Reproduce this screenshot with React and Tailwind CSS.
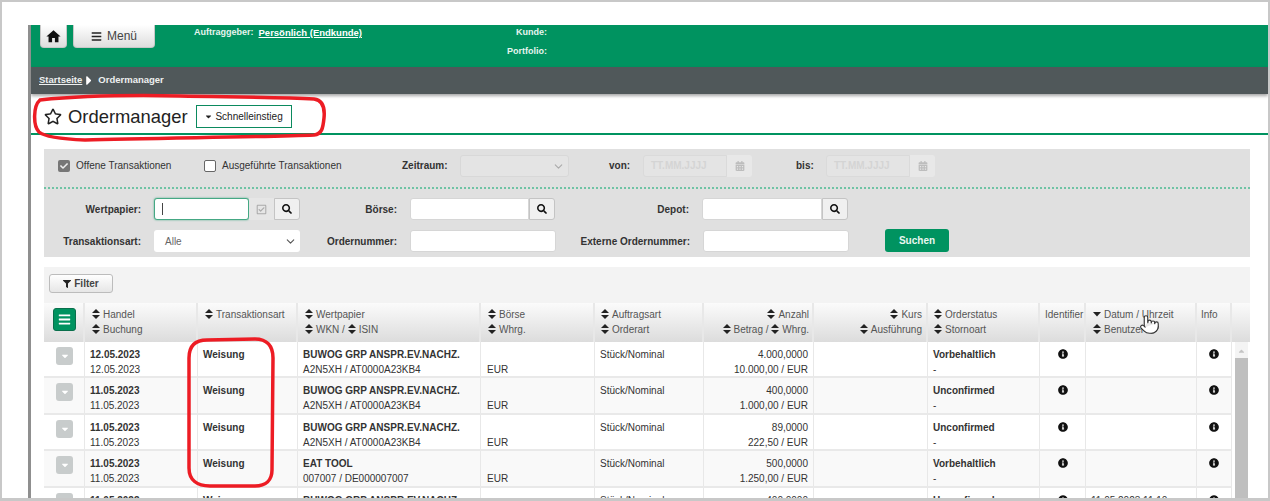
import React from "react";
import { FaBars, FaRegStar, FaCaretDown, FaCaretRight, FaSearch, FaFilter, FaRegCheckSquare, FaCheck, FaCalendarAlt, FaInfoCircle } from "react-icons/fa";
import { MdHome } from "react-icons/md";
import { ChevronDown, Pointer } from "lucide-react";

const GRID = "grid grid-cols-[41px_113px_100px_183px_114px_109px_110px_114px_112px_46px_111px_35px]";

const Sort = ({ down }) => (
  <svg viewBox="0 0 8 10" className="inline-block h-[10px] w-[8px] mr-[3px] align-[-1px] text-[#222]" fill="currentColor">
    {down ? <path d="M0 3H8L4 7.5Z" /> : <path d="M4 0L8 4H0ZM4 10L0 6H8Z" />}
  </svg>
);

const Input = ({ w, cls = "" }) => <div className={`${w} h-[22px] bg-white rounded-[3px] border border-[#d6d6d6] ${cls}`} />;

const SearchBtn = () => (
  <div className="w-[26px] h-[22px] flex items-center justify-center bg-[#f0f0f0] border border-[#c4c4c4] rounded-r-[3px]">
    <FaSearch className="w-[10px] h-[10px] text-[#111]" />
  </div>
);

const DateField = ({ ml }) => (
  <div className={`flex ${ml}`}>
    <div className="w-[84px] h-[22px] bg-[#e4e4e4] border border-[#dadada] rounded-l-[3px] pl-[7px] text-[10px] leading-[20px] font-bold text-[#d4d4d4]">TT.MM.JJJJ</div>
    <div className="w-[25px] h-[22px] bg-[#e8e8e8] rounded-r-[3px] flex items-center justify-center">
      <FaCalendarAlt className="w-[10px] h-[10px] text-[#bdbdbd]" />
    </div>
  </div>
);

const rows = [
  { d: "12.05.2023", d2: "12.05.2023", w: "BUWOG GRP ANSPR.EV.NACHZ.", k: "A2N5XH / AT0000A23KB4", a: "4.000,0000", b: "10.000,00 / EUR", s: "Vorbehaltlich", h: "h-[36px]" },
  { d: "11.05.2023", d2: "11.05.2023", w: "BUWOG GRP ANSPR.EV.NACHZ.", k: "A2N5XH / AT0000A23KB4", a: "400,0000", b: "1.000,00 / EUR", s: "Unconfirmed", h: "h-[37px]" },
  { d: "11.05.2023", d2: "11.05.2023", w: "BUWOG GRP ANSPR.EV.NACHZ.", k: "A2N5XH / AT0000A23KB4", a: "89,0000", b: "222,50 / EUR", s: "Unconfirmed", h: "h-[36px]" },
  { d: "11.05.2023", d2: "11.05.2023", w: "EAT TOOL", k: "007007 / DE000007007", a: "500,0000", b: "1.250,00 / EUR", s: "Vorbehaltlich", h: "h-[37px]" },
  { d: "11.05.2023", d2: "11.05.2023", w: "BUWOG GRP ANSPR.EV.NACHZ.", k: "A2N5XH / AT0000A23KB4", a: "400,0000", b: "1.000,00 / EUR", s: "Unconfirmed", t: "11.05.2023 11:10", h: "h-[36px]" },
];

const cell = "border-r border-[#e8e8e8] px-[5px] pt-[5px] leading-[15px]";
const th = "border-r-2 border-[#e8e8e8] pt-[4px] leading-[15px]";

export default function App() {
  return (
    <div className="relative w-[1270px] h-[501px] overflow-hidden bg-white text-[10px] text-[#333] [font-family:'Liberation_Sans',Arial,sans-serif]">
      <div className="h-full border-t-2 border-l-2 border-r-2 border-b-[3px] border-[#c8c8c8] pt-[23px] overflow-hidden">
        <div className="ml-[26px] h-full border-l-[3px] border-[#8f8f8f] overflow-hidden">
          {/* green header */}
          <div className="h-[42px] bg-[#009360] flex items-start text-[#e6f5ef] font-bold">
            <div className="ml-[9px] w-[27px] h-[23px] bg-gradient-to-b from-[#ffffff] to-[#dedede] rounded-b-[4px] border border-t-0 border-[#c8c8c8] flex items-center justify-center">
              <MdHome className="w-[17px] h-[17px] text-[#111]" />
            </div>
            <div className="ml-[6px] w-[82px] h-[23px] bg-gradient-to-b from-[#ffffff] to-[#dedede] rounded-b-[4px] border border-t-0 border-[#c8c8c8] flex items-center justify-center gap-[5px] text-[12px] font-normal text-[#444]">
              <FaBars className="w-[11px] h-[11px] text-[#222]" />
              Menü
            </div>
            <div className="ml-[39px] pt-[1px] leading-[13px] text-[9px] w-[167px] flex whitespace-nowrap">
              <span>Auftraggeber:</span>
              <span className="ml-[5px] underline text-[9.5px] text-white">Persönlich (Endkunde)</span>
            </div>
            <div className="ml-[126px] -mt-[2px] w-[60px] text-right text-[9px] leading-[19px]">
              <div>Kunde:</div>
              <div>Portfolio:</div>
            </div>
          </div>
          {/* breadcrumb */}
          <div className="relative h-[27px] bg-[#50585a] shadow-[0_2px_3px_rgba(0,0,0,0.35)] flex items-center pl-[8px] text-[#eef0f0] text-[9.5px] font-bold">
            <span className="underline">Startseite</span>
            <FaCaretRight className="w-[14px] h-[15px] mr-[2px] text-white" />
            <span>Ordermanager</span>
          </div>
          {/* title */}
          <div className="h-[41px] border-b-2 border-[#009360] flex items-center pl-[13px] pt-[6px]">
            <FaRegStar className="w-[18px] h-[17px] text-[#222]" />
            <h1 className="ml-[6px] text-[18.4px] leading-[24px] text-[#222]">Ordermanager</h1>
            <div className="ml-[8px] w-[96px] h-[23px] border border-[#0b8a5e] flex items-center justify-center gap-[2px] text-[#222]">
              <FaCaretDown className="w-[9px] h-[9px]" />
              Schnelleinstieg
            </div>
          </div>
          {/* filter panel */}
          <div className="ml-[13px] mt-[14px] w-[1206px] h-[108px] bg-[#e0e0e0] pt-[6px]">
            <div className="flex items-center h-[22px] text-[#333]">
              <div className="ml-[14px] w-[12px] h-[12px] bg-[#777] rounded-[2px] flex items-center justify-center">
                <FaCheck className="w-[8px] h-[8px] text-[#eee]" />
              </div>
              <span className="ml-[6px] w-[118px] pb-[2px] whitespace-nowrap">Offene Transaktionen</span>
              <div className="ml-[10px] w-[12px] h-[12px] bg-white border border-[#666] rounded-[2px]" />
              <span className="ml-[6px] w-[123px] pb-[2px] whitespace-nowrap">Ausgeführte Transaktionen</span>
              <span className="ml-[57px] w-[58px] pb-[2px] font-bold">Zeitraum:</span>
              <div className="w-[109px] h-[22px] bg-[#e4e4e4] border border-[#d8d8d8] rounded-[3px] flex items-center justify-end pr-[3px]">
                <ChevronDown className="w-[13px] h-[13px] text-[#aaa]" />
              </div>
              <span className="ml-[40px] w-[21px] pb-[2px] font-bold">von:</span>
              <DateField ml="ml-[13px]" />
              <span className="ml-[44px] w-[17px] pb-[2px] font-bold">bis:</span>
              <DateField ml="ml-[13px]" />
            </div>
            <div className="mt-[10px] border-t-2 border-dotted border-[#6fc3a4]" />
            <div className="mt-[9px] flex items-center h-[22px] font-bold">
              <span className="w-[97px] text-right">Wertpapier:</span>
              <div className="ml-[13px] flex">
                <div className="w-[95px] h-[22px] bg-white border border-[#45a884] rounded-[3px] pl-[7px] flex items-center shadow-[0_0_2px_#45a884]">
                  <div className="w-px h-[12px] bg-[#444]" />
                </div>
                <div className="w-[25px] h-[22px] bg-[#e6e6e6] flex items-center justify-center">
                  <FaRegCheckSquare className="w-[11px] h-[11px] text-[#aaa]" />
                </div>
                <SearchBtn />
              </div>
              <span className="w-[97px] text-right">Börse:</span>
              <div className="ml-[13px] flex">
                <Input w="w-[119px]" cls="rounded-r-none" />
                <SearchBtn />
              </div>
              <span className="w-[134px] text-right">Depot:</span>
              <div className="ml-[13px] flex">
                <Input w="w-[120px]" cls="rounded-r-none" />
                <SearchBtn />
              </div>
            </div>
            <div className="mt-[10px] flex items-center h-[22px] font-bold">
              <span className="w-[97px] text-right">Transaktionsart:</span>
              <div className="ml-[13px] w-[146px] h-[22px] bg-white rounded-[3px] flex items-center justify-between pl-[11px] pr-[3px] font-normal text-[#666]">
                Alle
                <ChevronDown className="w-[13px] h-[13px] text-[#555]" />
              </div>
              <span className="w-[97px] text-right">Ordernummer:</span>
              <Input w="ml-[13px] w-[146px]" />
              <span className="w-[134px] text-right">Externe Ordernummer:</span>
              <Input w="ml-[13px] w-[146px]" />
              <div className="ml-[36px] w-[64px] h-[23px] -mt-[1px] bg-[#009360] rounded-[3px] flex items-center justify-center text-[#e9f7f1]">Suchen</div>
            </div>
          </div>
          {/* toolbar */}
          <div className="ml-[13px] mt-[10px] w-[1206px] h-[36px] bg-[#f3f3f3] pl-[5px] pt-[7px]">
            <div className="w-[64px] h-[19px] rounded-[3px] border border-[#bcbcbc] bg-gradient-to-b from-[#ffffff] to-[#e6e6e6] flex items-center justify-center gap-[3px] font-bold text-[#444]">
              <FaFilter className="w-[8px] h-[8px] text-[#222]" />
              Filter
            </div>
          </div>
          {/* table */}
          <div className="ml-[13px] w-[1206px]">
            <div className="flex h-[39px] bg-gradient-to-b from-[#fbfbfb] to-[#dcdcdc] text-[#555]">
              <div className={`${GRID} w-[1188px]`}>
                <div className="border-r-2 border-[#e8e8e8] pl-[9px] pt-[5px]">
                  <div className="w-[23px] h-[23px] bg-[#009360] border border-[#0a6f4c] rounded-[3px] flex items-center justify-center">
                    <FaBars className="w-[13px] h-[13px] text-white" />
                  </div>
                </div>
                <div className={`${th} pl-[7px]`}><div><Sort />Handel</div><div><Sort />Buchung</div></div>
                <div className={`${th} pl-[7px]`}><div><Sort />Transaktionsart</div></div>
                <div className={`${th} pl-[7px]`}><div><Sort />Wertpapier</div><div><Sort />WKN / <Sort />ISIN</div></div>
                <div className={`${th} pl-[7px]`}><div><Sort />Börse</div><div><Sort />Whrg.</div></div>
                <div className={`${th} pl-[6px]`}><div><Sort />Auftragsart</div><div><Sort />Orderart</div></div>
                <div className={`${th} pr-[3px] text-right`}><div><Sort />Anzahl</div><div><Sort />Betrag / <Sort />Whrg.</div></div>
                <div className={`${th} pr-[4px] text-right`}><div><Sort />Kurs</div><div><Sort />Ausführung</div></div>
                <div className={`${th} pl-[6px]`}><div><Sort />Orderstatus</div><div><Sort />Stornoart</div></div>
                <div className={`${th} pl-[5px] whitespace-nowrap`}>Identifier</div>
                <div className={`${th} pl-[7px]`}><div><Sort down />Datum / Uhrzeit</div><div><Sort />Benutzer</div></div>
                <div className={`${th} pl-[4px]`}>Info</div>
              </div>
            </div>
            <div className="flex">
              <div className="w-[1188px]">
                {rows.map((r, i) => (
                  <div key={i} className={`${GRID} ${r.h} border-b-2 border-[#e9e9e9] ${i % 2 ? "bg-[#f9f9f9]" : "bg-white"}`}>
                    <div className="border-r border-[#e8e8e8] pl-[12px] pt-[5px]">
                      <div className="w-[17px] h-[18px] bg-[#c8cccc] rounded-[3px] flex items-center justify-center">
                        <FaCaretDown className="w-[10px] h-[10px] text-white" />
                      </div>
                    </div>
                    <div className={cell}><div className="font-bold">{r.d}</div><div>{r.d2}</div></div>
                    <div className={`${cell} font-bold`}>Weisung</div>
                    <div className={`${cell} whitespace-nowrap`}><div className="font-bold">{r.w}</div><div>{r.k}</div></div>
                    <div className={`${cell} pl-[6px]`}><div>&nbsp;</div><div>EUR</div></div>
                    <div className={cell}>Stück/Nominal</div>
                    <div className={`${cell} text-right`}><div>{r.a}</div><div>{r.b}</div></div>
                    <div className={cell} />
                    <div className={cell}><div className="font-bold">{r.s}</div><div>-</div></div>
                    <div className={`${cell} flex justify-center pt-[7px]`}><FaInfoCircle className="w-[10px] h-[10px] text-[#111]" /></div>
                    <div className={`${cell} whitespace-nowrap`}>{r.t}</div>
                    <div className={`${cell} flex justify-center pt-[7px]`}><FaInfoCircle className="w-[10px] h-[10px] text-[#111]" /></div>
                  </div>
                ))}
              </div>
              <div className="ml-[3px] w-[13px] bg-[#f4f4f4] flex flex-col items-center">
                <FaCaretDown className="w-[9px] h-[9px] mt-[5px] rotate-180 text-[#c4c4c4] shrink-0" />
                <div className="mt-[2px] w-full h-[150px] bg-[#bfbfbf]" />
              </div>
            </div>
          </div>
        </div>
      </div>
      {/* annotations drawn over the screenshot */}
      <svg className="absolute inset-0 pointer-events-none" width="1270" height="501" fill="none">
        <path d="M40 100 C80 96 130 95 180 96 C230 97 280 97 314 99 C323 100 325 108 324 118 C323 128 322 134 314 135 C270 137 150 138 85 140 C60 139 45 137 39 132 C33 126 33 106 40 100Z" stroke="#ed1c24" strokeWidth="3.5" />
        <path d="M207 340 L255 339 C267 339 273 346 273 358 L272 470 C272 480 266 486 255 486 L210 486 C197 486 189 480 189 468 L189 358 C189 346 195 340 207 340Z" stroke="#ed1c24" strokeWidth="3.5" />
      </svg>
      <Pointer className="absolute left-[1139px] top-[314px] w-[21px] h-[21px] text-[#333] fill-white" strokeWidth={1.3} />
    </div>
  );
}
